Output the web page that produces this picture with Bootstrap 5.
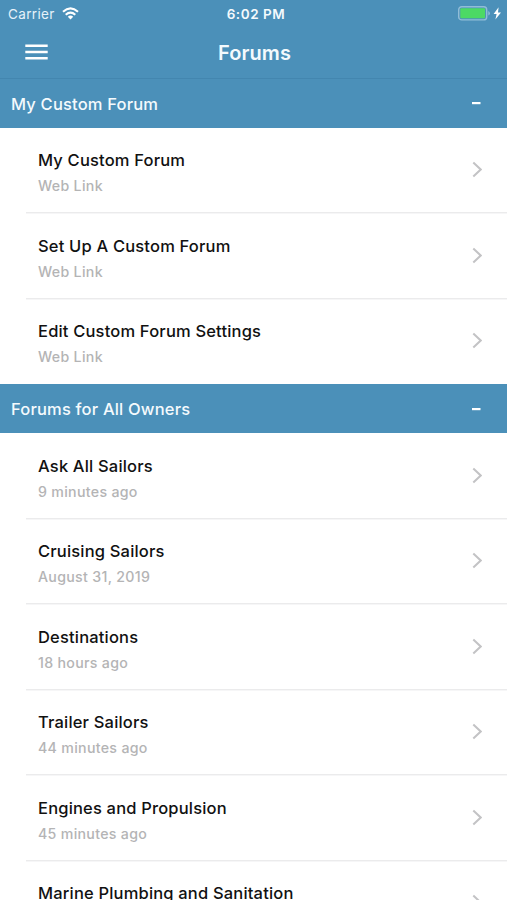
<!DOCTYPE html>
<html lang="en">
<head>
<meta charset="utf-8">
<meta name="viewport" content="width=device-width, initial-scale=1">
<title>Forums</title>
<link href="https://cdn.jsdelivr.net/npm/bootstrap@5.3.0/dist/css/bootstrap.min.css" rel="stylesheet">
<style>
  body { font-family: Inter, "Liberation Sans", sans-serif; height: 900px; overflow: hidden; background: #fff; }
  main { height: 821px; overflow: hidden; }
  .bar { background: #4b90b9; color: #f4fafd; }
  .status { height: 27px; font-size: 13px; line-height: 28px; padding: 0 6px 0 8px; }
  .status > * { flex: 1 1 0; }
  .carrier { font-size: 13.5px; letter-spacing: .35px; color: #e6f2f9; }
  .wifi { margin-left: 7px; }
  .clock { font-size: 13.5px; font-weight: 600; letter-spacing: .55px; padding-left: 3px; }
  .title-row { height: 52px; border-bottom: 1px solid #4386af; padding: 0 24px; }
  .title-row > * { flex: 1 1 0; }
  .page-title { font-size: 20px; font-weight: 600; line-height: 50px; letter-spacing: .1px; padding-left: 2px; }
  .section-head { height: 48.8px; padding: 0 26px 0 11px; font-size: 16.5px; font-weight: 500; letter-spacing: .18px; }
  .section-head span { padding-top: 1.4px; }
  .forum { height: 85.5px; margin-left: 26px; padding: 19.6px 25px 0 12px; border-bottom: 1px solid #ebebec; box-shadow: 0 1px #f6f6f7; }
  .forum.final { border-bottom: 0; box-shadow: none; }
  .name { font-size: 16.5px; line-height: 26px; font-weight: 500; letter-spacing: .18px; color: #111; }
  .meta { font-size: 14.2px; line-height: 26px; font-weight: 500; letter-spacing: .3px; color: #b4b4b5; }
  .chev { margin-top: 14px; }
</style>
<script src="https://cdn.jsdelivr.net/npm/bootstrap@5.3.0/dist/js/bootstrap.bundle.min.js"></script>
</head>
<body>
<svg class="d-none"><symbol id="chevron" viewBox="0 0 10 17"><path d="M1.3 1.5 8.7 8.5 1.3 15.5" fill="none" stroke="#c3c3c5" stroke-width="2"/></symbol></svg>
<header class="bar">
  <div class="status d-flex align-items-center">
    <div class="d-flex align-items-center"><span class="carrier">Carrier</span>
      <svg class="wifi" width="17" height="13" viewBox="0 0 17 13" fill="none" stroke="#fff" stroke-width="2.1"><path d="M1 4.7Q8.5-1.9 16 4.7"/><path d="M3.7 7.7Q8.5 3.6 13.3 7.7"/><path d="M8.5 12.4 5.8 9.7Q8.5 7.4 11.2 9.7Z" fill="#fff" stroke="none"/></svg>
    </div>
    <div class="clock text-center">6:02 PM</div>
    <div class="d-flex align-items-center justify-content-end">
      <svg width="43" height="15" viewBox="0 0 43 15"><rect x=".7" y=".7" width="28" height="13.2" rx="3" fill="none" stroke="#91bdd7" stroke-width="1.4"/><rect x="2.3" y="2.3" width="24.8" height="10" rx="1" fill="#4cd964"/><path d="M30.3 5v4.6q1.6-.7 1.6-2.3T30.3 5Z" fill="#91bdd7"/><path d="M40.6 1.3 35.6 8h3l-1.2 5.5L43 6.5h-3Z" fill="#fff"/></svg>
    </div>
  </div>
  <div class="title-row d-flex align-items-center">
    <div class="d-flex align-items-center">
      <svg width="24" height="18" viewBox="0 0 24 18"><path d="M1.3 1.7h22.4M1.3 8h22.4M1.3 14.3h22.4" stroke="#fff" stroke-width="2.4"/></svg>
    </div>
    <div class="page-title text-center">Forums</div>
    <div></div>
  </div>
</header>
<main>
  <div class="bar section-head d-flex align-items-center justify-content-between"><span>My Custom Forum</span><svg width="9" height="4"><rect x="0" y="1" width="8.5" height="2.2" fill="#fff"/></svg></div>
  <div class="forum d-flex justify-content-between"><div><div class="name">My Custom Forum</div><div class="meta">Web Link</div></div><svg class="chev" width="10" height="17"><use href="#chevron"/></svg></div>
  <div class="forum d-flex justify-content-between"><div><div class="name">Set Up A Custom Forum</div><div class="meta">Web Link</div></div><svg class="chev" width="10" height="17"><use href="#chevron"/></svg></div>
  <div class="forum final d-flex justify-content-between"><div><div class="name">Edit Custom Forum Settings</div><div class="meta">Web Link</div></div><svg class="chev" width="10" height="17"><use href="#chevron"/></svg></div>
  <div class="bar section-head d-flex align-items-center justify-content-between"><span>Forums for All Owners</span><svg width="9" height="4"><rect x="0" y="1" width="8.5" height="2.2" fill="#fff"/></svg></div>
  <div class="forum d-flex justify-content-between"><div><div class="name">Ask All Sailors</div><div class="meta">9 minutes ago</div></div><svg class="chev" width="10" height="17"><use href="#chevron"/></svg></div>
  <div class="forum d-flex justify-content-between"><div><div class="name">Cruising Sailors</div><div class="meta">August 31, 2019</div></div><svg class="chev" width="10" height="17"><use href="#chevron"/></svg></div>
  <div class="forum d-flex justify-content-between"><div><div class="name">Destinations</div><div class="meta">18 hours ago</div></div><svg class="chev" width="10" height="17"><use href="#chevron"/></svg></div>
  <div class="forum d-flex justify-content-between"><div><div class="name">Trailer Sailors</div><div class="meta">44 minutes ago</div></div><svg class="chev" width="10" height="17"><use href="#chevron"/></svg></div>
  <div class="forum d-flex justify-content-between"><div><div class="name">Engines and Propulsion</div><div class="meta">45 minutes ago</div></div><svg class="chev" width="10" height="17"><use href="#chevron"/></svg></div>
  <div class="forum final d-flex justify-content-between"><div><div class="name">Marine Plumbing and Sanitation</div></div><svg class="chev" width="10" height="17"><use href="#chevron"/></svg></div>
</main>
</body>
</html>
